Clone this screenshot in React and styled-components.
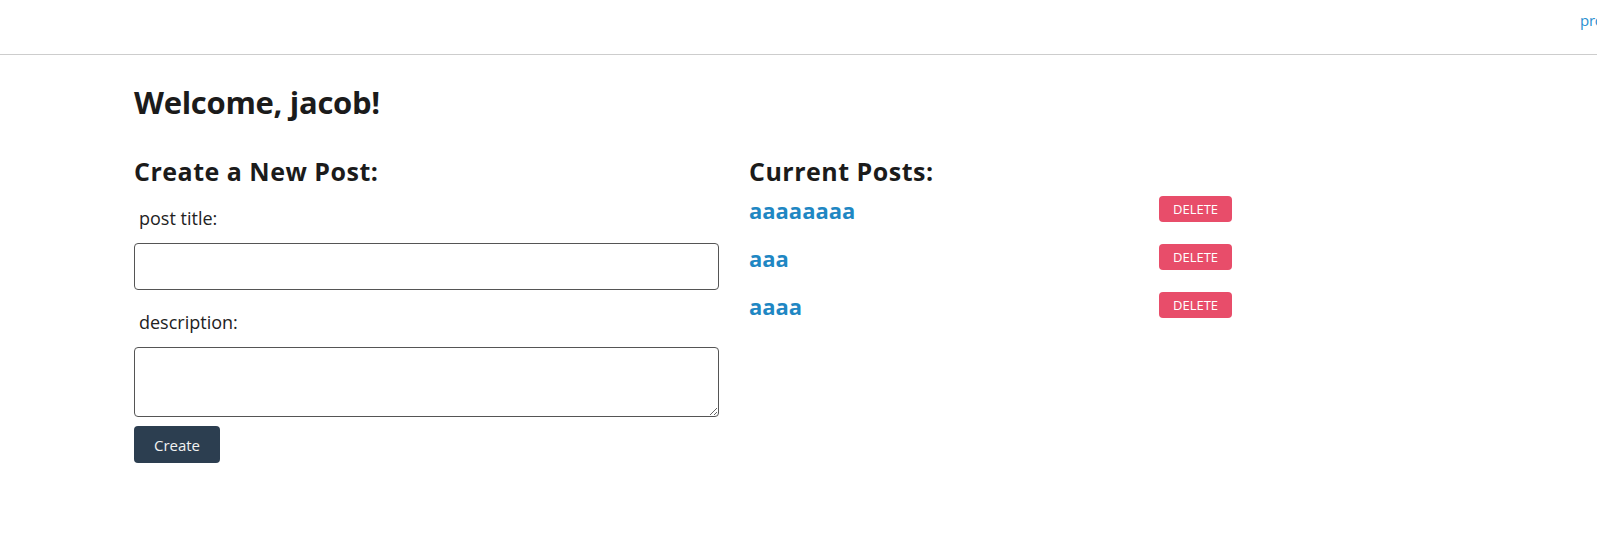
import React from 'react'
import styled, { createGlobalStyle } from 'styled-components'

const posts = [
  { id: 1, title: 'aaaaaaaa' },
  { id: 2, title: 'aaa' },
  { id: 3, title: 'aaaa' },
]

const App = () => {
  return (
    <>
      <GlobalStyle />
      <Header>
        <Nav>
          <NavLink href='#'>profile</NavLink>
          <NavLink href='#'>logout</NavLink>
        </Nav>
      </Header>
      <Main>
        <Title>Welcome, jacob!</Title>
        <Columns>
          <section>
            <Heading>Create a New Post:</Heading>
            <Form onSubmit={e => e.preventDefault()}>
              <Label htmlFor='title'>post title:</Label>
              <Input id='title' type='text' />
              <Label htmlFor='description'>description:</Label>
              <TextArea id='description' />
              <CreateButton type='submit'>Create</CreateButton>
            </Form>
          </section>
          <section>
            <Heading>Current Posts:</Heading>
            <PostList>
              {posts.map(post => (
                <PostRow key={post.id}>
                  <PostLink href='#'>{post.title}</PostLink>
                  <DeleteButton>delete</DeleteButton>
                </PostRow>
              ))}
            </PostList>
          </section>
        </Columns>
      </Main>
    </>
  )
}

const GlobalStyle = createGlobalStyle`
    body{
        margin:0;
        background:#fff;
        color:#1b1b1b;
        font-family:"Open Sans", Lato, sans-serif;
    }
`
const Header = styled.header`
    height:54px;
    border-bottom:1px solid #cdcdcd;
    display:flex;
    overflow:hidden;
`
const Nav = styled.nav`
    margin-left:1580px;
    padding-top:10px;
    display:flex;
    gap:16px;
    white-space:nowrap;
`
const NavLink = styled.a`
    color:#2a8fd0;
    font-size:15px;
    line-height:20px;
    letter-spacing:-0.3px;
    text-decoration:none;
`
const Main = styled.main`
    padding:0 134px;
`
const Title = styled.h1`
    margin:27px 0 0;
    font-size:31px;
    line-height:40px;
    font-weight:700;
    letter-spacing:-0.3px;
`
const Columns = styled.div`
    display:grid;
    grid-template-columns:615px 500px;
`
const Heading = styled.h2`
    margin:34px 0 0;
    font-size:25px;
    line-height:30px;
    font-weight:700;
    letter-spacing:0.5px;
`
const Form = styled.form`
    display:flex;
    flex-direction:column;
    align-items:flex-start;
    width:585px;
`
const Label = styled.label`
    margin:20px 0 13px;
    padding-left:5px;
    font-size:18px;
    line-height:24px;
    color:#222;
`
const Input = styled.input`
    box-sizing:border-box;
    width:100%;
    height:47px;
    border:1px solid #555;
    border-radius:4px;
    padding:0 10px;
    font:inherit;
`
const TextArea = styled.textarea`
    box-sizing:border-box;
    width:100%;
    height:70px;
    border:1px solid #555;
    border-radius:4px;
    padding:8px 10px;
    font:inherit;
`
const CreateButton = styled.button`
    margin-top:9px;
    width:86px;
    height:37px;
    background:#2c3e50;
    color:#f2f2f2;
    border:none;
    border-radius:4px;
    font-family:inherit;
    font-size:15px;
    cursor:pointer;
`
const PostList = styled.div`
    margin-top:9px;
    display:flex;
    flex-direction:column;
    gap:18px;
`
const PostRow = styled.div`
    display:grid;
    grid-template-columns:410px auto;
    align-items:start;
`
const PostLink = styled.a`
    color:#1f87c3;
    font-size:22px;
    line-height:30px;
    font-weight:700;
    text-decoration:none;
`
const DeleteButton = styled.button`
    justify-self:start;
    margin-top:1px;
    width:73px;
    height:26px;
    background:#e84d6a;
    color:#fff;
    border:none;
    border-radius:4px;
    font-family:inherit;
    font-size:13px;
    text-transform:uppercase;
    cursor:pointer;
`

export default App
